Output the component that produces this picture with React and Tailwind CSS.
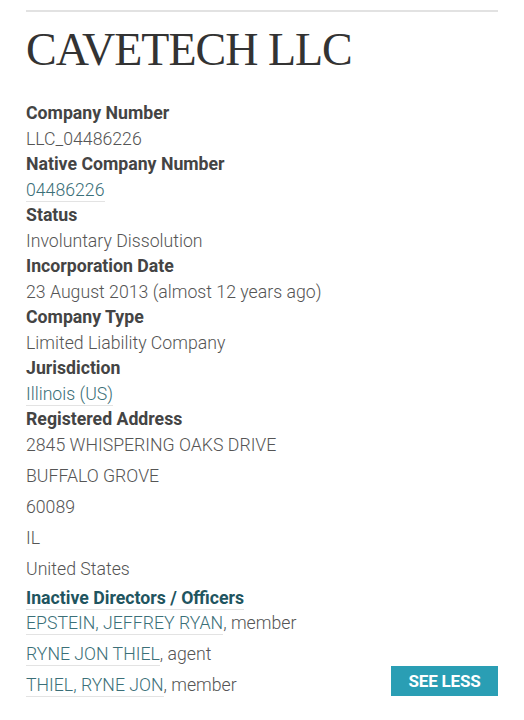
import React from "react";

const fields = [
  { label: "Company Number", value: "LLC_04486226" },
  { label: "Native Company Number", value: "04486226", link: true },
  { label: "Status", value: "Involuntary Dissolution" },
  { label: "Incorporation Date", value: "23 August 2013 (almost 12 years ago)" },
  { label: "Company Type", value: "Limited Liability Company" },
  { label: "Jurisdiction", value: "Illinois (US)", link: true },
];

const address = [
  "2845 WHISPERING OAKS DRIVE",
  "BUFFALO GROVE",
  "60089",
  "IL",
  "United States",
];

const officers = [
  { name: "EPSTEIN, JEFFREY RYAN", role: "member" },
  { name: "RYNE JON THIEL", role: "agent" },
  { name: "THIEL, RYNE JON", role: "member" },
];

const roboto = { fontFamily: "Roboto, 'Liberation Sans', sans-serif" };

export default function App() {
  return (
    <div className="w-[524px] h-[720px] bg-white overflow-hidden" style={roboto}>
      <div className="px-[26px] pt-[10px]">
        <div className="border-t-2 border-[#e2e2e2]" />
        <h1
          className="mt-[12px] text-[46px] leading-[52px] text-[#333] tracking-[-1px]"
          style={{ fontFamily: "'Liberation Serif', serif" }}
        >
          CAVETECH LLC
        </h1>

        <dl className="mt-[25px] text-[17.7px] leading-[25.5px]">
          {fields.map((f) => (
            <React.Fragment key={f.label}>
              <dt className="font-bold text-[#444]">{f.label}</dt>
              <dd className="font-light text-[#555]">
                {f.link ? (
                  <a className="text-[#3b6f78] border-b border-[#e3e3e3] pb-[1px]">
                    {f.value}
                  </a>
                ) : (
                  f.value
                )}
              </dd>
            </React.Fragment>
          ))}
          <dt className="font-bold text-[#444]">Registered Address</dt>
          <dd className="font-light text-[#555]">
            {address.map((line) => (
              <p key={line} className="leading-[31px] first:-mt-[3px]">
                {line}
              </p>
            ))}
          </dd>
          <dt className="mt-[1px]">
            <a className="font-bold text-[#1f5560] border-b border-[#e3e3e3] pb-[1px]">
              Inactive Directors / Officers
            </a>
          </dt>
          <dd className="font-light text-[#555]">
            {officers.map((o, i) => (
              <div key={o.name} className="flex items-center justify-between leading-[31px] first:-mt-[3px]">
                <span>
                  <a className="text-[#3b6f78] border-b border-[#e3e3e3] pb-[1px]">{o.name}</a>, {o.role}
                </span>
                {i === officers.length - 1 && (
                  <button className="w-[107px] h-[30px] -mt-[10px] bg-[#2a9eb4] text-white font-bold text-[17px] tracking-[-0.2px]">
                    SEE LESS
                  </button>
                )}
              </div>
            ))}
          </dd>
        </dl>
      </div>
    </div>
  );
}
